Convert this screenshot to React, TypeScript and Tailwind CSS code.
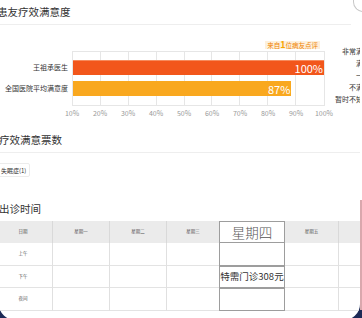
import React from "react";

const bars = [
  { label: "王祖承医生", value: 100, color: "bg-[#f2561b]", border: "border-[#f68a5c]" },
  { label: "全国医院平均满意度", value: 87, color: "bg-[#f9a81f]", border: "border-[#f9a81f]" },
];
const axis = ["10%", "20%", "30%", "40%", "50%", "60%", "70%", "80%", "90%", "100%"];
const legend = ["非常满意", "满意", "一般", "不满意", "暂时不知道"];
const days = ["日期", "星期一", "星期二", "星期三", "星期四", "星期五", "星期六"];
const rows = [
  { label: "上午", thu: "", h: "h-[23px]" },
  { label: "下午", thu: "特需门诊308元", h: "h-[22px]" },
  { label: "夜间", thu: "", h: "h-[23px]" },
];

function Chart() {
  return (
    <div className="mt-[16px] flex items-start">
      <div className="w-[75px] shrink-0 pt-[22px] pr-[4px] text-right text-[7px] leading-[8px] text-[#333]">
        <div>{bars[0].label}</div>
        <div className="mt-[13px]">{bars[1].label}</div>
      </div>
      <div className="w-[253px] shrink-0 flex flex-col">
        <div className="flex h-[8px] justify-end pr-[5px] mb-[2px]">
          <div className="bg-[#fdf0dc] px-[2px] text-[6.5px] leading-[8px] text-[#f08300] whitespace-nowrap">
            来自<span className="text-[9px] font-bold leading-[8px] text-[#f7a600]">1</span>位病友点评
          </div>
        </div>
        <div className="relative h-[55px] border border-[#e6e6e6]">
          <div className="absolute inset-0 grid grid-cols-9">
            {Array.from({ length: 9 }).map((_, i) => (
              <div key={i} className={i < 8 ? "border-r border-[#e6e6e6]" : ""} />
            ))}
          </div>
          <div className="relative flex flex-col gap-[6px] pt-[8px]">
            {bars.map((b) => (
              <div
                key={b.label}
                className={`${b.color} h-[15px] border-t ${b.border} text-right pr-[1px] text-[11px] leading-[14px] text-white`}
                style={{ width: `${b.value}%` }}
              >
                {b.value}%
              </div>
            ))}
          </div>
        </div>
        <div className="mt-[3px] ml-[-14px] flex">
          {axis.map((a) => (
            <div key={a} className="w-[28px] shrink-0 text-center text-[7px] leading-[8px] text-[#999]">
              {a}
            </div>
          ))}
        </div>
      </div>
      <div className="mt-[4px] w-[45px] shrink-0 text-right text-[7px] leading-[12px] text-[#333] whitespace-nowrap">
        {legend.map((l) => (
          <div key={l}>{l}</div>
        ))}
      </div>
    </div>
  );
}

function Schedule() {
  const cols = "grid-cols-[59px_57px_57px_52px_66px_54px_57px]";
  return (
    <div className={`ml-[-3px] grid w-[402px] ${cols}`}>
      {days.map((d, i) =>
        i === 4 ? (
          <div
            key={d}
            className="h-[22px] border border-[#9d9d9d] bg-white flex items-center justify-center text-[13.5px] leading-[20px] text-[#555] font-light"
          >
            {d}
          </div>
        ) : (
          <div
            key={d}
            className={`h-[22px] bg-[#ebebeb] flex items-center justify-center text-[4.5px] text-[#555] ${
              i === 3 ? "" : "border-r border-[#d9d9d9]"
            }`}
          >
            {d}
          </div>
        )
      )}
      {rows.map((r, ri) =>
        days.map((d, i) => {
          if (i === 4) {
            return (
              <div
                key={ri + d}
                className={`${r.h} ${
                  ri === 0 ? "border-x border-b" : "border"
                } border-[#9d9d9d] flex items-center justify-center text-[9.5px] text-[#333] whitespace-nowrap`}
              >
                {r.thu}
              </div>
            );
          }
          return (
            <div
              key={ri + d}
              className={`${r.h} border-b border-[#e3e3e3] ${
                i === 3 ? "" : "border-r border-r-[#e0e0e0]"
              } flex items-center justify-center text-[4.5px] text-[#555]`}
            >
              {i === 0 ? r.label : ""}
            </div>
          );
        })
      )}
    </div>
  );
}

export default function App() {
  return (
    <div className="relative w-[362px] h-[318px] overflow-hidden bg-white font-['Noto_Sans_CJK_SC',sans-serif]">
      <div className="absolute left-0 bottom-0 w-[20px] h-[20px] bg-[#1d2a56]" />
      <div className="absolute right-0 bottom-0 w-[20px] h-[20px] bg-[#1d2a56]" />
      <div className="absolute right-0 top-[200px] w-[2px] h-[110px] bg-[#d9a7ad]" />
      <div className="absolute left-[-1px] top-0 w-[361px] h-[320px] bg-white rounded-b-[16px] overflow-hidden">
        <div className="ml-[-2px] w-[380px]">
          <div className="h-[25px] w-[354px] border-b border-[#eeeeee] text-[10.5px] leading-[24px] text-[#333]">
            患友疗效满意度
          </div>
          <Chart />
          <div className="mt-[11px] h-[25px] w-[366px] border-b border-[#eeeeee] pl-[2px] text-[10.5px] leading-[24px] text-[#333]">
            疗效满意票数
          </div>
          <div className="mt-[10px] inline-flex h-[14px] items-center rounded-[2px] border border-[#ececec] px-[3px] text-[6px] text-[#333]">
            失眠症(1)
          </div>
          <div className="mt-[19px] h-[24px] pl-[2px] text-[10.5px] leading-[24px] text-[#333]">出诊时间</div>
          <Schedule />
        </div>
      </div>
      <div className="absolute left-[353px] top-[-10px] w-[20px] h-[22px] border-l border-b border-[#c8c8c8] rounded-bl-[10px]" />
    </div>
  );
}
